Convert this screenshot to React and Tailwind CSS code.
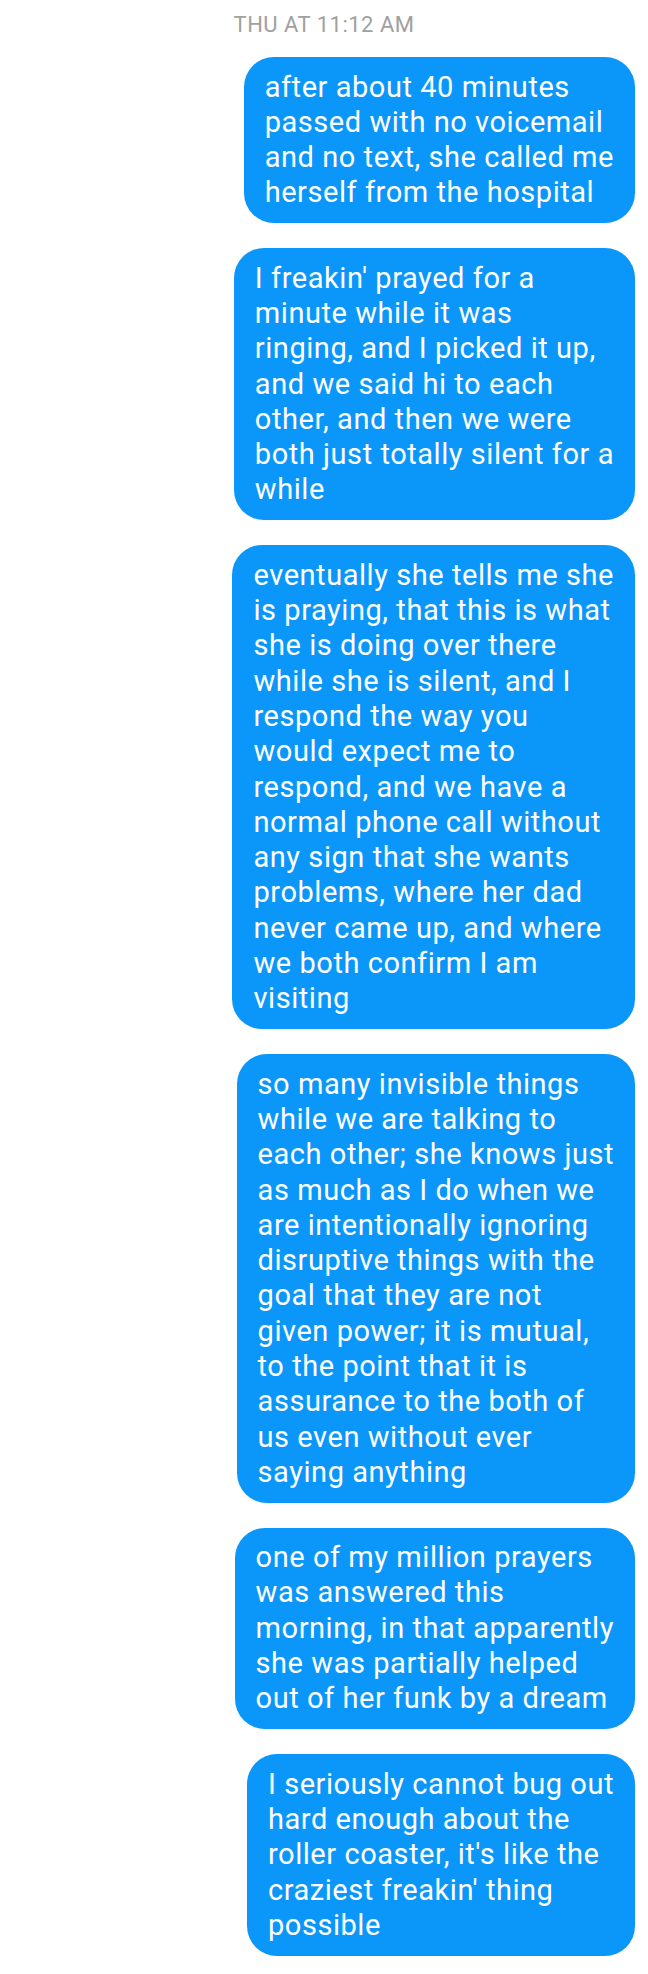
const messages = [
  [
    'after about 40 minutes',
    'passed with no voicemail',
    'and no text, she called me',
    'herself from the hospital',
  ],
  [
    "I freakin' prayed for a",
    'minute while it was',
    'ringing, and I picked it up,',
    'and we said hi to each',
    'other, and then we were',
    'both just totally silent for a',
    'while',
  ],
  [
    'eventually she tells me she',
    'is praying, that this is what',
    'she is doing over there',
    'while she is silent, and I',
    'respond the way you',
    'would expect me to',
    'respond, and we have a',
    'normal phone call without',
    'any sign that she wants',
    'problems, where her dad',
    'never came up, and where',
    'we both confirm I am',
    'visiting',
  ],
  [
    'so many invisible things',
    'while we are talking to',
    'each other; she knows just',
    'as much as I do when we',
    'are intentionally ignoring',
    'disruptive things with the',
    'goal that they are not',
    'given power; it is mutual,',
    'to the point that it is',
    'assurance to the both of',
    'us even without ever',
    'saying anything',
  ],
  [
    'one of my million prayers',
    'was answered this',
    'morning, in that apparently',
    'she was partially helped',
    'out of her funk by a dream',
  ],
  [
    'I seriously cannot bug out',
    'hard enough about the',
    "roller coaster, it's like the",
    "craziest freakin' thing",
    'possible',
  ],
];

const Bubble = ({ lines }) => (
  <div className="w-fit rounded-[30px] bg-[#0a97f9] px-[21px] py-[12.5px] text-[29px] leading-[35.3px] tracking-[0.55px] text-white">
    {lines.map((line, i) => (
      <div key={i} className="whitespace-nowrap">{line}</div>
    ))}
  </div>
);

const App = () => {
  return (
    <div className="min-h-screen bg-white font-['Roboto',sans-serif]">
      <div className="pt-[11px] text-center text-[22px] leading-[28px] tracking-[0.5px] text-[#a0a0a0]">
        THU AT 11:12 AM
      </div>
      <div className="mt-[18px] flex flex-col items-end gap-[25px] pr-[13px] pb-[15px]">
        {messages.map((lines, idx) => (
          <Bubble key={idx} lines={lines} />
        ))}
      </div>
    </div>
  );
};

export default App;
